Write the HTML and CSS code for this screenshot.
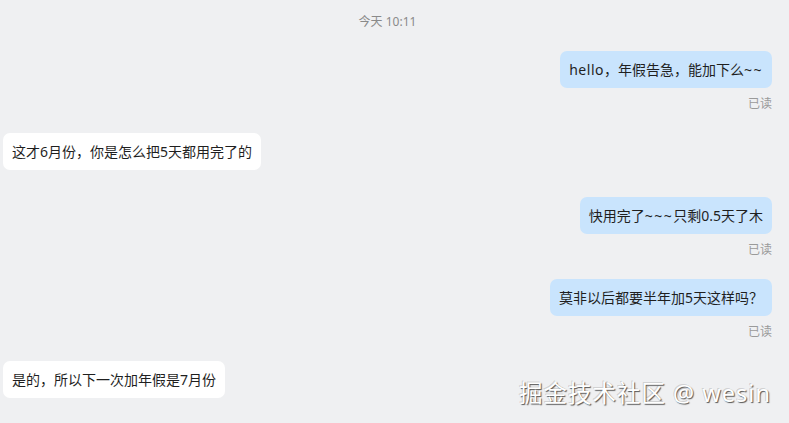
FILE: index.html
```html
<!DOCTYPE html>
<html lang="zh-CN">
<head>
<meta charset="utf-8">
<title>聊天</title>
<link rel="stylesheet" href="styles.css">
</head>
<body>
<div class="chat">
  <div class="time">今天 10:11</div>
  <div class="msg right">
    <div class="bubble blue"><span class="latin">hello</span>，年假告急，能加下么<span class="tilde">~~</span></div>
    <div class="read">已读</div>
  </div>
  <div class="msg left">
    <div class="bubble white">这才6月份，你是怎么把5天都用完了的</div>
  </div>
  <div class="msg right">
    <div class="bubble blue">快用完了<span class="tilde">~~~</span>只剩0.5天了木</div>
    <div class="read">已读</div>
  </div>
  <div class="msg right">
    <div class="bubble blue">莫非以后都要半年加5天这样吗？</div>
    <div class="read">已读</div>
  </div>
  <div class="msg left">
    <div class="bubble white">是的，所以下一次加年假是7月份</div>
  </div>
</div>
<div class="watermark">掘金技术社区 @ wesin</div>
</body>
</html>
```
FILE: styles.css
```css
html, body {
  margin: 0;
  padding: 0;
  background: #eff0f2;
  width: 789px;
  height: 423px;
  overflow: hidden;
  font-family: "Noto Sans", "Noto Sans CJK SC", sans-serif;
  color: #1f1f1f;
}
.chat {
  display: flex;
  flex-direction: column;
  padding: 14px 17px 0 3px;
}
.time {
  align-self: center;
  font-size: 12px;
  line-height: 16px;
  color: #8a8a8a;
  margin-bottom: 21px;
}
.msg {
  display: flex;
  flex-direction: column;
}
.msg.right {
  align-items: flex-end;
  margin-bottom: 21px;
}
.msg.left {
  align-items: flex-start;
  margin-bottom: 27px;
}
.bubble {
  font-size: 14px;
  line-height: 17px;
  padding: 10px 9px 10px 9px;
  border-radius: 7px;
  white-space: nowrap;
}
.bubble.blue {
  background: #c9e4fd;
}
.bubble.white {
  background: #ffffff;
}
.latin {
  letter-spacing: 0.5px;
}
.tilde {
  letter-spacing: 1.5px;
}
.read {
  margin-top: 8px;
  font-size: 12px;
  line-height: 16px;
  color: #9a9a9a;
}
.watermark {
  position: absolute;
  left: 519px;
  top: 377px;
  font-size: 23.5px;
  line-height: 32px;
  color: #ffffff;
  text-shadow: 1px 1px 1px #555, -1px -1px 0 rgba(0,0,0,0.15);
  letter-spacing: 1px;
}
```
